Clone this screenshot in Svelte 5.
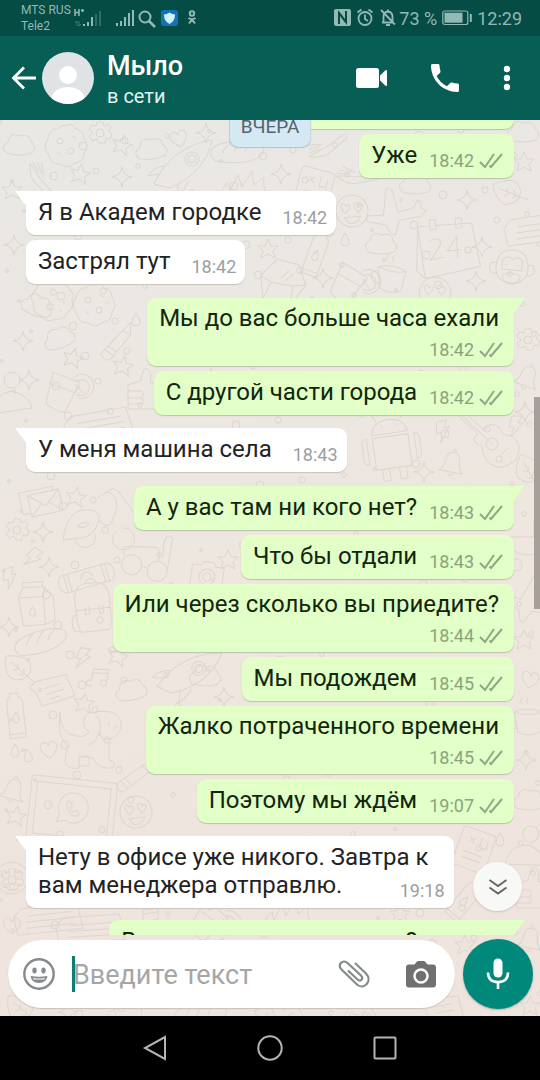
<!--
  Chat screen: status bar, contact header, message list over a doodle
  wallpaper, composer and the system navigation keys.
-->
<script>
  let draft = '';

  // tail = first bubble of a group, layout: row | below | wrapped
  const messages = [
    { out: true,  text: 'Мы на месте', time: '18:42' },
    { out: true,  text: 'Уже', time: '18:42' },
    { out: false, text: 'Я в Академ городке', time: '18:42', tail: true },
    { out: false, text: 'Застрял тут', time: '18:42' },
    { out: true,  text: 'Мы до вас больше часа ехали', time: '18:42', tail: true, layout: 'below' },
    { out: true,  text: 'С другой части города', time: '18:42' },
    { out: false, text: 'У меня машина села', time: '18:43', tail: true },
    { out: true,  text: 'А у вас там ни кого нет?', time: '18:43', tail: true },
    { out: true,  text: 'Что бы отдали', time: '18:43' },
    { out: true,  text: 'Или через сколько вы приедите?', time: '18:44', layout: 'below' },
    { out: true,  text: 'Мы подождем', time: '18:45' },
    { out: true,  text: 'Жалко потраченного времени', time: '18:45', layout: 'below' },
    { out: true,  text: 'Поэтому мы ждём', time: '19:07' },
    { out: false, text: 'Нету в офисе уже никого. Завтра к\nвам менеджера отправлю.', time: '19:18', tail: true, layout: 'wrapped' },
    { out: true,  text: 'В какое время вас ждать?', time: '19:19', tail: true },
  ];

  // Wallpaper doodles, each drawn around its own centre
  const shapes = {
    star: 'M0-10 3-3 10-3 5 2 7 9 0 5-7 9-5 2-10-3-3-3Z',
    spark: 'M0-10Q1-1 10 0Q1 1 0 10Q-1 1-10 0Q-1-1 0-10Z',
    heart: 'M0 8C-12 0-9-8-4-8Q-1-8 0-4Q1-8 4-8C9-8 12 0 0 8Z',
    drop: 'M0-7Q8 5 0 6Q-8 5 0-7Z',
    bolt: 'M-4-10H6L2-3H7L-5 11-2 1H-7Z',
    leaf: 'M-12-12Q16-14 12 4Q6 16-8 10Q-14 2-12-12ZM-7-6 16 14M0-4V2H-5M6 0V7H1',
    carton: 'M-17-8-12-18H8L18-8V16L8 20H-14ZM-17-8H8V20M8-8 10-18M-12-18V-23H8V-18M-4 2Q2 10-4 11Q-10 10-4 2Z',
    bread: 'M-24 10Q-30 0-14-6Q8-14 22-10Q30-6 24 2Q10 14-20 13ZM-14 4Q-12-4-6-8M-3 2Q-1-6 5-10M8 0Q10-7 16-10',
    note: 'M-20-6-14-11 18-14 24 8-10 14-14 0ZM-6-3 12-6M-4 3 14 0M-2 8 9 6',
    bottle: 'M-8-12Q-8-18-4-19V-23H4V-19Q8-18 8-12V22H-8ZM-8 18H8M0-4Q6 6 0 7Q-6 6 0-4Z',
    dog: 'M-31-26Q-32-4-14-2Q-6 0-2-6Q-12-14-4-24Q6-28 20-26Q32-22 30-10Q26 2 12 2L8-6Q4 8-4 6M-31-26Q-34 0-24 8L-26 24Q-24 32-12 30V18L2 20Q8 32 22 30Q26 24 18 22V4M-10 20Q0 12-2 28H-12M18-16V-13M26-12 22-9M6-22Q12-14 8-2',
    laptop: 'M-40-30H40Q43-30 43-26V34H-43V-26Q-43-30-40-30ZM-37-24H37V28H-37ZM-14 14-12 6A15 15 0 1 1-6 12ZM-4-8Q-8-2-2 4Q4 10 8 4L4 1 1 3-2-1 0-4Z',
    bell: 'M-12 8Q-7 4-7-3Q-6-12 0-12Q7-12 7-3Q7 4 12 8ZM-3 9Q0 14 3 9M-2-13Q0-17 2-13',
    bag: 'M-17 0Q-20-22-6-24H6Q20-22 17 0Q18 20 14 24H-14Q-18 20-17 0ZM-17 2H17M-8-1V7H-4V-1M6-1V7H10V-1M-6-24Q0-34 6-24M-18 6Q-25 10-21 22L-14 24',
    board: 'M-24-9H22Q28-8 28 0Q28 8 22 9H-24Q-29 6-29 0Q-29-8-24-9ZM-18-9V9M-22-9V9M17-9V9M21-9V9M-6 0A6 6 0 1 1 6 0',
    robot: 'M-18-14H18V18H-18ZM-18-17Q-16-30 0-31Q16-30 18-17ZM-8-25H-7M7-25H8M-12-30-16-37M12-30 16-37M-24-14Q-29-14-29-8V8Q-28 12-24 12ZM24-14Q29-14 29-8V8Q28 12 24 12ZM-12 18V30H-5V18M5 18V30H12V18',
    guitar: 'M-34-30-29-34-4-12Q2-22 12-14Q14-6 24-6Q36 2 28 18Q14 30 2 22Q-6 14-6 4Q-20 0-10-8ZM-31-31 4 2M4-4A6 6 0 1 1 4 8A6 6 0 1 1 4-4M12 14 20 6',
    plane: 'M-28 14Q-30 8-24 8L-12 6-12-20Q-8-24-4-16L2 2 18-4 20-12 24-10 25-4 30-2 26 4 4 10 2 24Q-2 28-8 16Z',
    calendar: 'M-26-20H28L34 24-22 32ZM-26-20-30 24-22 32M-14-26H-8V-16H-14ZM12-26H18V-16H12ZM-16-4Q-8-10-4-4Q-4 2-16 14L-2 12M12-8 2 6H16M12-8V14',
    smile: 'M0-16A16 16 0 1 1 0 16A16 16 0 1 1 0-16M-10-3Q-12-8-8-8-6-8-6-5-3-8-2-5-2-2-7 2ZM3-3Q1-8 5-8 7-8 7-5 10-8 11-5 11-2 6 2ZM-8 6H8Q4 14-4 12Z',
    pencil: 'M-18 6 8-12 18-18 15-6-10 14Q-16 14-18 6ZM8-12 15-6M-13 3-6 11M-9 0-2 8',
    cup: 'M-14-18 14-12 4 20Q-8 20-16 14ZM-16-6 12-1M-4 3H-3M2 8H3M-8 10H-7M8-17A12 12 0 1 1 14 3M10-12A8 8 0 1 1 13 0M15-9 10 0M10-9 20-2',
    cookie: 'M0-20Q6-24 10-17Q18-16 18-8Q24 0 18 7Q18 16 9 17Q2 24-6 18Q-16 18-17 9Q-24 0-18-7Q-16-18-8-17Q-4-22 0-20ZM-6-8A3 3 0 1 1-6-2 3 3 0 1 1-6-8M5 2A3 3 0 1 1 5 8 3 3 0 1 1 5 2M6-10 10-8M-9 6-5 9M12-2H15',
    fist: 'M-14 18V-6Q-8-8-2-10L2-22Q8-24 9-16L8-8H14V18ZM-14 0H0Q3 4 0 7H-14M0 7Q3 11 0 13H-14',
    person: 'M0-24A8 8 0 1 1 0-8 8 8 0 1 1 0-24M-20 18Q-20-2 0-5Q18 0 20 12Z',
    mail: 'M-16-10H16V12H-16ZM-16-10 0 4 16-10M-16 12-4 1M16 12 4 1M-16 8H-24V-14H10V-10',
    gear: 'M-3-11H3L4-7 8-9 11-5 8-2 12 1 10 6 6 5 5 10H-1L-3 6-8 8-11 3-7 0-11-4-8-8-4-7ZM0-4A4 4 0 1 1 0 4 4 4 0 1 1 0-4',
    moped: 'M-32 18Q-28-10-12-12Q6-14 4-2Q10 6 16 2L22-14Q22-28 12-30L2-24M4-2Q0 14-14 16L-32 18M-20 18A10 10 0 1 0 0 12M28 6A11 11 0 1 1 20 10M12-30 18-34 24-30 40-8M-18 4Q-10-2-6 2Q-10 8-18 4',
    glasses: 'M-12-6A10 10 0 1 1-12 14 10 10 0 1 1-12-6M14-2A10 10 0 1 1 14 18 10 10 0 1 1 14-2M-2 4 4 6M-20-4Q-24-14-16-14L10-16Q16-14 14-2M24 6 26-26Q22-32 18-24V-6',
    camera: 'M-16-10H-8L-5-14H5L8-10H16V12H-16ZM0-7A8 8 0 1 1 0 9 8 8 0 1 1 0-7M0-3A4 4 0 1 1 0 5 4 4 0 1 1 0-3',
    cloud: 'M-14 8Q-20 0-12-3Q-10-14 0-9Q10-12 11-3Q18 2 12 8Q0 12-14 8Z',
    rocket: 'M-30 20Q-12-18 28-24Q22 8-14 24ZM8-12A7 7 0 1 1 8 2 7 7 0 1 1 8-12M8-9A4 4 0 1 1 8-1 4 4 0 1 1 8-9M-18 2Q-30 2-36 12L-24 10M4 16Q2 26-6 32L-6 20',
    fork: 'M-18-10Q-6-4-2 0L18 8Q22 12 16 13L-4 6Q-12 4-18-10M-16-12-6-6M-12-14-3-6M-8-16 0-4',
    card: 'M-14-20H14Q17-20 17-17V20H-17V-17Q-17-20-14-20ZM-8-12-2-6M-2-12-8-6M4-14V-4H11V-12M-10 4H10M-10 10H10',
    book: 'M-34-4-26-12H30L34 14H-32ZM-20-4H24M-22 2H26M-22 8H26',
    fire: 'M-24 14Q-26 0-18-4L-16 4-8-12-4 0 6-16 8-2 18-10Q16 4 24 8L18 16',
    gem: 'M-22 0-10-20H12L24-2 14 22H-14ZM-22 0-10 4 12 2 24-2M-10 4-14 22M12 2 14 22M-2-2 4-12M3-1 9-10',
    mug: 'M-14-8Q0-14 14-8L12 12Q0 18-10 12ZM-14-8Q0-3 14-8M-14-4Q-24-2-18 6Q-14 10-11 8M-6-16Q-9-19-6-22M0-16Q-3-19 0-22',
    monkey: 'M0-18Q16-18 16 0Q16 14 0 16Q-16 14-16 0Q-16-18 0-18ZM-16-4Q-24-6-22 4Q-18 8-15 6M16-4Q24-6 22 4Q18 8 15 6M-7-3H-5M5-3H7M-10-8Q-4-14 0-8Q4-14 10-8V2H-10ZM-9 8Q0 2 9 8Q8 16 0 15Q-8 16-9 8',
    music: 'M-6 8A3 3 0 1 1-7 4V-8L8-10V5A3 3 0 1 1 7 2M-7-4 8-6',
    pram: 'M-24-8H6V-26Q26-24 24-4Q20 10 0 10Q-18 10-24-8ZM6-8H24M-12 14A6 6 0 1 1-12 26 6 6 0 1 1-12 14M12 14A6 6 0 1 1 12 26 6 6 0 1 1 12 14M6-8Q12-16 12-25',
  };

  // [shape, x, y, rotation]
  const doodles = [
    ['cloud', 20, 145, 0], ['cookie', 66, 146, 0], ['gear', 100, 133, 0], ['star', 122, 145, 15], ['cloud', 152, 149, -8], ['heart', 179, 139, -15], ['spark', 206, 133, 0], ['bread', 237, 151, 8], ['rocket', 184, 164, 0], ['fork', 42, 180, 25], ['star', 80, 174, 10], ['spark', 122, 177, 0], ['fork', 327, 146, -60], ['spark', 281, 174, 0], ['fire', 246, 187, 0], ['card', 314, 189, 15], ['cloud', 524, 132, 0], ['star', 524, 162, 0], ['fork', 357, 176, -30],
    ['star', 12, 190, 0], ['smile', 352, 211, -5], ['plane', 396, 210, 5], ['cloud', 416, 184, 0], ['spark', 467, 200, 0], ['leaf', 508, 192, -20], ['calendar', 445, 245, -4], ['book', 538, 228, -8], ['cloud', 382, 244, 0], ['bottle', 316, 254, 20], ['drop', 345, 240, 0], ['star', 268, 249, 0], ['spark', 323, 278, 0], ['spark', 482, 247, 0], ['spark', 476, 281, 0], ['gem', 282, 281, 15], ['mug', 391, 277, 10], ['monkey', 512, 268, 5], ['smile', 435, 293, 0], ['cup', 350, 284, 20], ['spark', 14, 245, 0],
    ['cloud', 38, 306, 20], ['cookie', 94, 305, 0], ['cookie', 52, 300, 60], ['cloud', 60, 338, -20], ['spark', 23, 341, 0], ['pencil', 117, 344, -12], ['star', 73, 358, 15], ['star', 123, 366, 10], ['spark', 29, 380, 0], ['person', 12, 396, 0], ['cup', 64, 392, 10], ['fist', 142, 391, 0], ['book', 98, 424, -10], ['drop', 136, 320, 0], ['gear', 528, 340, 0], ['bell', 527, 378, 20], ['spark', 525, 412, 0],
    ['robot', 392, 450, -8], ['guitar', 488, 442, 0], ['bell', 452, 464, 10], ['spark', 424, 472, 0], ['bolt', 443, 431, -15], ['bolt', 516, 426, 0], ['leaf', 528, 470, 20],
    ['mail', 45, 502, -12], ['star', 76, 497, 10], ['gear', 17, 530, 0], ['spark', 43, 532, 0], ['moped', 95, 522, 0], ['bolt', 33, 558, 30], ['glasses', 144, 562, 6], ['camera', 207, 576, 8], ['star', 228, 560, 0], ['spark', 49, 567, 0], ['bolt', 10, 578, -15], ['board', 87, 578, -16], ['carton', 36, 605, -4], ['bag', 93, 607, -6], ['spark', 9, 627, 0], ['bread', 40, 641, -5], ['leaf', 18, 668, 0], ['bolt', 83, 658, 10], ['music', 99, 678, 10], ['star', 118, 656, 15], ['note', 50, 691, -8], ['star', 84, 703, 8], ['bottle', 16, 716, -6], ['dog', 91, 738, 0], ['cloud', 132, 690, -10], ['heart', 49, 750, -8], ['drop', 15, 751, 0], ['drop', 28, 756, -15], ['bell', 13, 791, 15], ['star', 16, 816, 10], ['laptop', 72, 809, 6], ['smile', 136, 812, -8], ['pencil', 134, 778, 0], ['cloud', 206, 676, 0], ['rocket', 190, 672, 10], ['spark', 224, 697, 0],
    ['pram', 528, 545, 0], ['plane', 534, 600, 30], ['star', 524, 640, 0], ['heart', 530, 680, 10], ['mug', 528, 720, 0], ['spark', 526, 760, 0], ['cloud', 530, 800, 0], ['card', 474, 850, 20], ['drop', 500, 840, 0], ['person', 528, 850, 10], ['fist', 530, 890, 0],
    ['gear', 12, 880, 0], ['smile', 12, 878, 0], ['book', 48, 918, -6], ['heart', 12, 926, 0], ['book', 90, 928, -4], ['music', 150, 918, 0], ['cup', 210, 922, 30], ['fire', 290, 916, 0], ['star', 400, 914, 0], ['bottle', 465, 900, 40],
    ['star', 465, 945, 0], ['bell', 530, 940, 10], ['leaf', 20, 1008, 0], ['spark', 68, 1012, 0], ['mug', 128, 1014, 0], ['bread', 200, 1014, 4], ['card', 280, 1016, 60], ['smile', 360, 1020, 0], ['note', 440, 1010, 0], ['star', 530, 1006, 0],
  ];

  // Small bubbles scattered between the doodles
  const dots = [];
  for (let i = 0; i < 340; i++) {
    const row = Math.floor(i / 12);
    dots.push({
      x: (i % 12) * 46 + ((i * 37 + row * 19) % 41),
      y: 122 + row * 32 + ((i * 53) % 29),
      r: 1.5 + (i * 7) % 4 * 0.8,
    });
  }
</script>

<div class="phone">
  <div class="status">
    <div class="carriers">
      <span>MTS RUS</span>
      <span>Tele2</span>
    </div>
    <svg class="signals" viewBox="0 0 128 28" aria-hidden="true">
      <path d="M1 2v7M5 2v7M1 5.500h4M7 3.500h3M8.500 2v3" stroke-width="1.500" />
      <path d="M3 19v-5l-2 2M5 14v5l2-2" opacity=".4" />
      <path class="fill" d="M9 17h2v2H9zM13 15h2v4h-2zM17 10h2v9h-2z" />
      <path class="fill" opacity=".3" d="M21 7h2v12h-2zM25 4h2v15h-2z" />
      <path class="fill" d="M42 16h2v3h-2zM46 14h2v5h-2zM50 10h2v9h-2zM54 6h2v13h-2zM58 3h2v16h-2z" />
      <circle cx="71" cy="10" r="5.500" stroke-width="2" />
      <path d="m75 14 6 6" stroke-width="2.600" />
      <rect x="87" y="3" width="17" height="16" rx="3" fill="#1173b8" stroke="none" />
      <path d="M95.500 5.500q3 2 5.500 2 0 7-5.500 9.500-5.500-2.500-5.500-9.500 2.500 0 5.500-2Z" fill="#d4efff" stroke="none" />
      <circle cx="118" cy="6.500" r="2.200" stroke-width="2" />
      <path d="M114.500 11q3.500 2.500 7 0M118 12.500l-3 4M118 12.500l3 4" stroke-width="2" />
    </svg>
    <div class="system">
      <svg class="indicators" viewBox="0 0 62 20" aria-hidden="true">
        <rect class="fill" x="0" y="1" width="17" height="17" rx="2" />
        <path class="cut" d="M5 16V5l7 9.500M12 3v11L5 4.500" />
        <circle cx="31" cy="10.500" r="6.500" stroke-width="1.800" />
        <path d="M31 6.500v4.500l3 2M23.500 4.500l4-3M38.500 4.500l-4-3" stroke-width="1.800" />
        <path d="M48 14.500h12M49.500 14V9q0-5 4.500-5.500Q58.500 4 58.500 9v5M54 3V1.500M52 17h4M47 2l14 14.500" stroke-width="1.800" />
      </svg>
      <span>73 %</span>
      <svg class="battery" viewBox="0 0 30 16" aria-hidden="true">
        <rect x=".8" y="1" width="25" height="13.500" rx="2" stroke-width="1.200" />
        <rect class="fill" x="2.500" y="2.700" width="18" height="10" />
        <path d="M28.800 4v8" stroke-width="2" />
      </svg>
      <span>12:29</span>
    </div>
  </div>

  <header>
    <button class="icon back" aria-label="Назад">
      <svg viewBox="0 0 24 24"><path d="M24 12H2M12 1.500 1.500 12 12 22.500" fill="none" stroke="#fff" stroke-width="2.800" /></svg>
    </button>
    <svg class="avatar" viewBox="0 0 52 52" aria-hidden="true">
      <clipPath id="face"><circle cx="26" cy="26" r="26" /></clipPath>
      <g clip-path="url(#face)">
        <rect width="52" height="52" fill="#dfe3e6" />
        <circle cx="26" cy="23" r="9" fill="#fff" />
        <path d="M9 46Q13 35 26 35T43 46V52H9Z" fill="#fff" />
      </g>
    </svg>
    <div class="contact">
      <h1>Мыло</h1>
      <p>в сети</p>
    </div>
    <div class="actions">
      <button class="icon" aria-label="Видеозвонок">
        <svg width="31" height="20" viewBox="0 0 31 20"><rect x="0" y="0" width="23" height="20" rx="2.500" fill="#fff" /><path d="M24 7.500 29.500 2.200Q31 1.500 31 3V17Q31 18.500 29.500 17.800L24 12.500Z" fill="#fff" /></svg>
      </button>
      <button class="icon" aria-label="Позвонить">
        <svg width="28" height="28" viewBox="3 3 18 18"><path fill="#fff" d="M6.620 10.790c1.440 2.830 3.760 5.140 6.590 6.590l2.200-2.200c.27-.27.67-.36 1.020-.24 1.120.37 2.330.57 3.570.57.55 0 1 .45 1 1V20c0 .55-.45 1-1 1-9.390 0-17-7.610-17-17 0-.55.45-1 1-1h3.500c.55 0 1 .45 1 1 0 1.250.2 2.450.57 3.570.11.35.03.74-.25 1.020z" /></svg>
      </button>
      <button class="icon" aria-label="Меню">
        <svg width="8" height="26" viewBox="0 0 8 26"><g fill="#fff"><circle cx="4" cy="4" r="3.200" /><circle cx="4" cy="13" r="3.200" /><circle cx="4" cy="22" r="3.200" /></g></svg>
      </button>
    </div>
  </header>

  <main>
    <svg class="wallpaper" viewBox="0 120 540 896" preserveAspectRatio="xMidYMin slice" aria-hidden="true">
      {#each doodles as [name, x, y, turn]}
        <path d={shapes[name]} transform="translate({x} {y}) rotate({turn})" />
      {/each}
      {#each dots as dot}
        <circle cx={dot.x} cy={dot.y} r={dot.r} />
      {/each}
    </svg>

    <section class="chat">
      <div class="date">ВЧЕРА</div>
      <div class="list">
        {#each messages as m}
          <div class="bubble {m.layout ?? 'row'}" class:out={m.out} class:tail={m.tail}>
            <p>{m.text}</p>
            <div class="meta">
              <time>{m.time}</time>
              {#if m.out}
                <svg class="ticks" viewBox="0 0 24 16" aria-hidden="true">
                  <path d="m1 9 5 5L15 1M10.500 12.500l1.500 1.500L23 1" />
                </svg>
              {/if}
            </div>
          </div>
        {/each}
      </div>
      <div class="scrollbar"></div>
      <button class="jump" aria-label="К последним сообщениям">
        <svg width="20" height="18" viewBox="0 0 20 18"><path d="m1.500 2 8.500 6 8.500-6M1.500 9.500l8.500 6 8.500-6" fill="none" stroke="#666" stroke-width="2" /></svg>
      </button>
    </section>

    <form class="composer" on:submit|preventDefault>
      <div class="field">
        <button type="button" class="icon" aria-label="Эмодзи">
          <svg width="32" height="32" viewBox="0 0 32 32">
            <circle cx="16" cy="16" r="14.700" fill="none" stroke="#858a8d" stroke-width="2.400" />
            <ellipse cx="11.500" cy="12.500" rx="2.200" ry="2.900" fill="#858a8d" />
            <ellipse cx="20.500" cy="12.500" rx="2.200" ry="2.900" fill="#858a8d" />
            <path d="M7.500 18Q16 19.500 24.500 18 23.500 25 16 25T7.500 18Z" fill="#858a8d" />
            <path d="M10 20Q16 21 22 20L21.300 21.500H10.700Z" fill="#fff" />
          </svg>
        </button>
        <span class="caret"></span>
        <input type="text" placeholder="Введите текст" aria-label="Введите текст" bind:value={draft} />
        <button type="button" class="icon clip" aria-label="Прикрепить">
          <svg width="32" height="28" viewBox="0 0 32 28"><path d="M17 3 28 13.500C35 21 26 30.500 19 24.500L3.500 9.500C-1 4.500 5 -1 9.500 3L23 15.500C26 19 22.500 22 19.500 19.500L10 10.500" fill="none" stroke="#858a8d" stroke-width="2.200" /></svg>
        </button>
        <button type="button" class="icon" aria-label="Камера">
          <svg width="30" height="28" viewBox="0 0 30 28"><path d="M3 4.500H8.500L11 1.500Q11.500 1 12.500 1H17.500Q18.500 1 19 1.500L21.500 4.500H27Q30 4.500 30 7.500V24.500Q30 27.500 27 27.500H3Q0 27.500 0 24.500V7.500Q0 4.500 3 4.500Z" fill="#707070" /><circle cx="15" cy="16" r="6.500" fill="none" stroke="#fff" stroke-width="2.400" /></svg>
        </button>
      </div>
      <button type="button" class="mic" aria-label="Голосовое сообщение">
        <svg width="24" height="32" viewBox="0 0 24 32"><rect x="7.500" y="0.500" width="9" height="19" rx="4.500" fill="#fff" /><path d="M2 14.500Q2 24 12 24T22 14.500M12 24V31" fill="none" stroke="#fff" stroke-width="2.600" /></svg>
      </button>
    </form>
  </main>

  <nav>
    <button class="icon" aria-label="Назад"><svg viewBox="0 0 26 26"><path d="M23 2V24L3 13Z" /></svg></button>
    <button class="icon" aria-label="Домой"><svg viewBox="0 0 26 26"><circle cx="13" cy="13" r="11.700" /></svg></button>
    <button class="icon" aria-label="Недавние"><svg viewBox="0 0 26 26"><rect x="2.500" y="2.500" width="21" height="21" rx="1" /></svg></button>
  </nav>
</div>

<style>
  :global(body) {
    margin: 0;
    background: #000;
  }

  .phone {
    display: flex;
    flex-direction: column;
    height: 100vh;
    overflow: hidden;
    font-family: Roboto, "Noto Sans", sans-serif;
  }
  h1, p { margin: 0; }
  svg { display: block; }
  .icon {
    display: flex;
    padding: 0;
    border: none;
    background: none;
    cursor: pointer;
  }

  /* ── Status bar ── */
  .status {
    display: flex;
    align-items: center;
    flex: 0 0 36px;
    padding: 0 18px 0 21px;
    background: #054c44;
    color: #93b9b4;
  }
  .status svg { fill: none; stroke: #93b9b4; }
  .status .fill { fill: #93b9b4; stroke: none; }
  .status .cut { stroke: #054c44; stroke-width: 2; }
  .carriers {
    display: flex;
    flex-direction: column;
    font-size: 12px;
    line-height: 16px;
  }
  .signals { width: 128px; height: 28px; margin: 5px 0 0 3px; }
  .system {
    display: flex;
    align-items: center;
    margin-left: auto;
    font-size: 18px;
  }
  .indicators { width: 62px; height: 20px; margin-right: 3px; }
  .battery { width: 30px; height: 16px; margin: 0 5px; }

  /* ── Contact header ── */
  header {
    display: flex;
    align-items: center;
    flex: 0 0 84px;
    padding: 0 29px 0 12px;
    background: #075e54;
    color: #fff;
  }
  .back svg { width: 24px; height: 24px; }
  .avatar { width: 52px; height: 52px; margin-left: 6px; }
  .contact { margin: 3px 0 0 13px; }
  .contact h1 { font-size: 27px; font-weight: 500; line-height: 32px; }
  .contact p { color: #e1f2ef; font-size: 20px; line-height: 28px; }
  .actions {
    display: flex;
    align-items: center;
    gap: 44px;
    margin-left: auto;
  }

  /* ── Wallpaper ── */
  main {
    position: relative;
    display: flex;
    flex: 1;
    flex-direction: column;
    min-height: 0;
    background: linear-gradient(170deg, #e9e8e5, #eee6df 50%, #efe3dd);
  }
  .wallpaper {
    position: absolute;
    inset: 0;
    width: 100%;
    height: 100%;
    fill: none;
    stroke: #ddd6cf;
  }

  /* ── Messages ── */
  .chat {
    position: relative;
    flex: 1;
    min-height: 0;
    overflow: hidden;
  }
  .date {
    position: absolute;
    top: -13px;
    left: 50%;
    z-index: 1;
    padding: 9px 11px;
    border-radius: 9px;
    background: #d4e9f4;
    box-shadow: 0 1px 1px #b5bfc2;
    color: #55646c;
    font-size: 19px;
    line-height: 22px;
    transform: translateX(-50%);
  }
  /* scrolled so the oldest bubble is partly above the edge */
  .list {
    display: flex;
    flex-direction: column;
    align-items: flex-start;
    margin-top: -40px;
    padding: 0 26px;
  }
  .bubble {
    position: relative;
    display: flex;
    align-items: flex-end;
    column-gap: 21px;
    flex-shrink: 0;
    margin-top: 5px;
    padding: 7px 9px 9px 12px;
    border-radius: 9px;
    background: #fff;
    box-shadow: 0 1px 1px #c9c2bb;
    color: #1f2324;
  }
  .bubble.tail {
    margin-top: 13px;
    border-top-left-radius: 0;
  }
  .bubble.out {
    align-self: flex-end;
    column-gap: 12px;
    padding-right: 11px;
    background: #e1ffc7;
    box-shadow: 0 1px 1px #b9c4a8;
    color: #12260c;
  }
  .bubble.out.tail {
    margin-top: 14px;
    border-radius: 9px 0 9px 9px;
  }
  .bubble.wrapped + .tail { margin-top: 12px; }
  .bubble.tail::before {
    content: '';
    position: absolute;
    top: 0;
    left: -11px;
    width: 12px;
    height: 16px;
    background: inherit;
    clip-path: polygon(0 0, 100% 0, 100% 100%);
  }
  .bubble.out.tail::before {
    left: auto;
    right: -11px;
    clip-path: polygon(0 0, 100% 0, 0 100%);
  }
  .bubble p {
    font-size: 24px;
    line-height: 28px;
    white-space: pre-line;
  }
  .bubble.below {
    flex-direction: column;
    padding-top: 6px;
    padding-bottom: 8px;
  }
  .below p { margin-right: 4px; }
  .wrapped { display: grid; }
  .wrapped p, .wrapped .meta { grid-area: 1 / 1; }
  .wrapped p { padding-right: 16px; }
  .wrapped .meta { place-self: end; }

  .meta {
    display: flex;
    align-items: center;
    gap: 5px;
    margin-bottom: -3px;
    color: #9b9e9f;
    font-size: 18px;
    line-height: 22px;
  }
  .below .meta { margin-top: 7px; }
  .out .meta { color: #8ba37d; }
  .ticks {
    width: 24px;
    height: 16px;
    fill: none;
    stroke: #8da883;
    stroke-width: 2;
  }

  .scrollbar {
    position: absolute;
    top: 34%;
    right: 0;
    width: 6px;
    height: 26%;
    background: #a69f9a;
  }
  .jump {
    position: absolute;
    right: 18px;
    bottom: 24px;
    display: flex;
    align-items: center;
    justify-content: center;
    width: 49px;
    height: 49px;
    padding: 0;
    border: none;
    border-radius: 50%;
    background: #f8f8f7;
    box-shadow: 0 1px 2px #c9c0ba;
    cursor: pointer;
  }

  /* ── Composer ── */
  .composer {
    position: relative;
    display: flex;
    align-items: center;
    gap: 8px;
    padding: 4px 7px 7px 8px;
  }
  .field {
    display: flex;
    align-items: center;
    flex: 1;
    min-width: 0;
    height: 68px;
    padding: 0 19px 0 15px;
    border-radius: 34px;
    background: #fff;
    box-shadow: 0 1px 1px #c9c0ba;
    box-sizing: border-box;
  }
  .caret {
    width: 3px;
    height: 36px;
    margin-left: 17px;
    background: #0b7f70;
  }
  input {
    flex: 1;
    min-width: 0;
    margin-left: -2px;
    padding: 2px 0 0;
    border: none;
    outline: none;
    background: none;
    color: #1f2324;
    font: 27px/32px Roboto, "Noto Sans", sans-serif;
  }
  input::placeholder { color: #a6a6a6; opacity: 1; }
  .clip { margin-right: 36px; }
  .mic {
    display: flex;
    align-items: center;
    justify-content: center;
    width: 70px;
    height: 70px;
    padding: 0;
    border: none;
    border-radius: 50%;
    background: #00897b;
    box-shadow: 0 1px 2px #a9aba3;
    cursor: pointer;
  }

  /* ── System keys ── */
  nav {
    display: flex;
    align-items: center;
    justify-content: center;
    gap: 89px;
    flex: 0 0 64px;
    background: #000;
  }
  nav svg {
    width: 26px;
    height: 26px;
    fill: none;
    stroke: #b4b4b4;
    stroke-width: 2;
  }
</style>
